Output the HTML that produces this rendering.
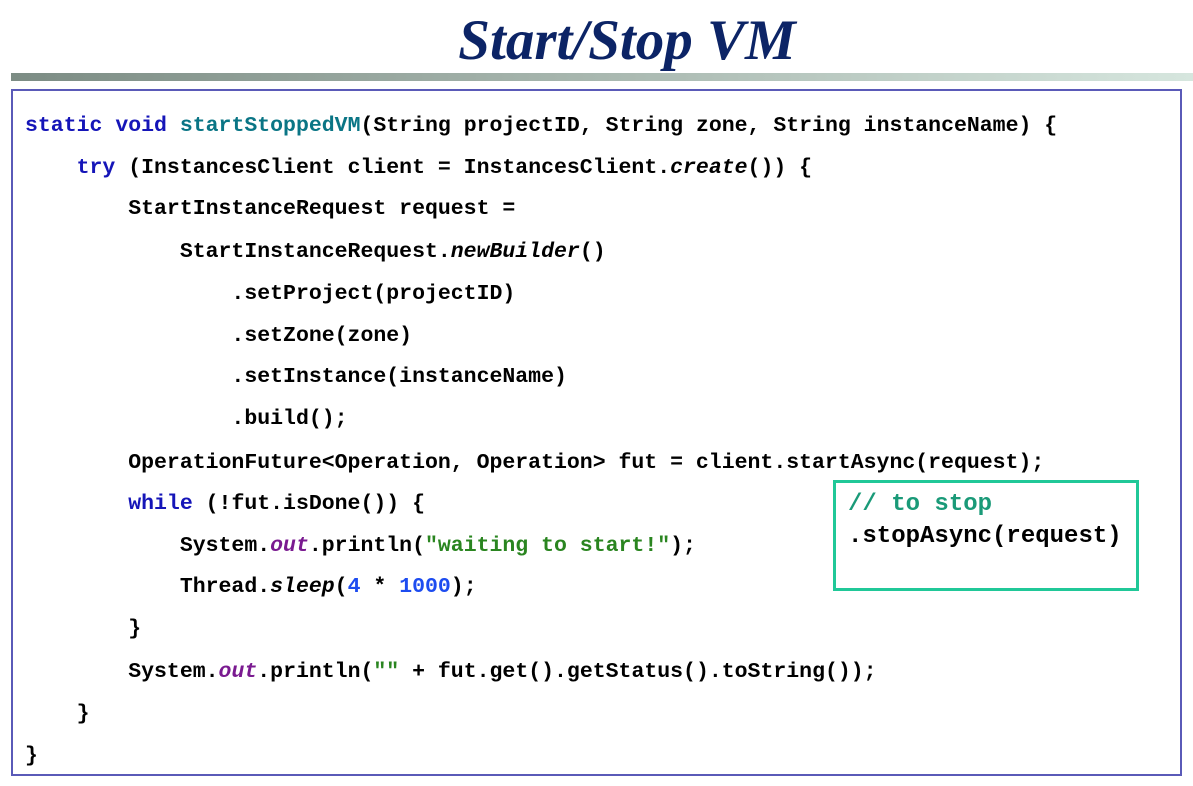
<!DOCTYPE html>
<html><head><meta charset="utf-8"><style>
body{margin:0;width:1193px;height:786px;background:#fff;position:relative;overflow:hidden}
.title{position:absolute;left:0;width:1254px;top:8px;text-align:center;font:italic bold 57px "Liberation Serif",serif;color:#0c2466}
.bar{position:absolute;left:11px;top:73px;width:1182px;height:8px;background:linear-gradient(to right,#7c8c84,#a9b8b0 50%,#d6e6de)}
.frame{position:absolute;left:11px;top:89px;width:1171px;height:687px;border:2px solid #5a5ab8;box-sizing:border-box}
.l{position:absolute;left:25px;font:bold 21.5px "Liberation Mono",monospace;white-space:pre;color:#000;line-height:24px}
.k{color:#1515b8}.m{color:#0a7585}.i{font-style:italic}.o{color:#7a1a90;font-style:italic}.s{color:#2a8520}.n{color:#1d4cf0}
.box{position:absolute;left:833px;top:480px;width:306px;height:111px;border:3px solid #20c898;box-sizing:border-box}
.b{position:absolute;left:848px;font:bold 24px "Liberation Mono",monospace;white-space:pre;line-height:26px}
</style></head><body>
<div class="title">Start/Stop VM</div>
<div class="bar"></div>
<div class="frame"></div>
<div class="l" style="top:114px"><span class="k">static void</span> <span class="m">startStoppedVM</span>(String projectID, String zone, String instanceName) {</div>
<div class="l" style="top:156px">    <span class="k">try</span> (InstancesClient client = InstancesClient.<span class="i">create</span>()) {</div>
<div class="l" style="top:197px">        StartInstanceRequest request =</div>
<div class="l" style="top:240px">            StartInstanceRequest.<span class="i">newBuilder</span>()</div>
<div class="l" style="top:282px">                .setProject(projectID)</div>
<div class="l" style="top:324px">                .setZone(zone)</div>
<div class="l" style="top:365px">                .setInstance(instanceName)</div>
<div class="l" style="top:407px">                .build();</div>
<div class="l" style="top:451px">        OperationFuture&lt;Operation, Operation&gt; fut = client.startAsync(request);</div>
<div class="l" style="top:492px">        <span class="k">while</span> (!fut.isDone()) {</div>
<div class="l" style="top:534px">            System.<span class="o">out</span>.println(<span class="s">"waiting to start!"</span>);</div>
<div class="l" style="top:575px">            Thread.<span class="i">sleep</span>(<span class="n">4</span> * <span class="n">1000</span>);</div>
<div class="l" style="top:617px">        }</div>
<div class="l" style="top:660px">        System.<span class="o">out</span>.println(<span class="s">""</span> + fut.get().getStatus().toString());</div>
<div class="l" style="top:702px">    }</div>
<div class="l" style="top:744px">}</div>
<div class="box"></div>
<div class="b" style="top:492px;color:#1a9a78">// to stop</div>
<div class="b" style="top:524px">.stopAsync(request)</div>
</body></html>
